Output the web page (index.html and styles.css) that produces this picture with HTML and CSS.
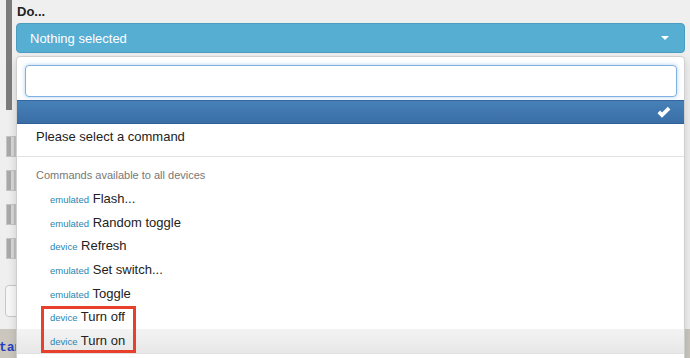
FILE: index.html
```html
<!DOCTYPE html>
<html lang="en">
<head>
    <meta charset="UTF-8">
    <meta name="viewport" content="width=device-width, initial-scale=1.0">
    <title>Do...</title>
    <link rel="stylesheet" href="styles.css">
</head>
<body>
    <div class="page">
        <!-- Action field with the select picker -->
        <div class="field">
            <div class="field-label">Do...</div>
            <button class="picker">
                <span>Nothing selected</span>
                <span class="caret"></span>
            </button>
        </div>

        <!-- Rows that sit behind the open menu -->
        <div class="rows">
            <div class="row-box"></div>
            <div class="row-box"></div>
            <div class="row-box"></div>
            <div class="row-box"></div>
        </div>
        <div class="back-button"></div>

        <div class="code-band"><span class="code">tan</span></div>

        <!-- Open dropdown menu -->
        <div class="menu">
            <div class="menu-search">
                <input type="text" class="search-input">
            </div>
            <div class="menu-selected">
                <svg class="check" width="15" height="13" viewBox="0 0 15 13">
                    <path d="M1.5 7.2 L4.2 4.6 L6 6.5 L11.8 0.8 L14.4 3.4 L6 11.8 Z" fill="#fff"/>
                </svg>
            </div>
            <div class="menu-item plain">Please select a command</div>
            <div class="menu-divider"></div>
            <div class="menu-header">Commands available to all devices</div>
            <div class="menu-item"><span class="tag">emulated</span> Flash...</div>
            <div class="menu-item"><span class="tag">emulated</span> Random toggle</div>
            <div class="menu-item"><span class="tag">device</span> Refresh</div>
            <div class="menu-item"><span class="tag">emulated</span> Set switch...</div>
            <div class="menu-item"><span class="tag">emulated</span> Toggle</div>
            <div class="menu-item"><span class="tag">device</span> Turn off</div>
            <div class="menu-item hover"><span class="tag">device</span> Turn on</div>
            <div class="menu-line"></div>
        </div>

        <!-- annotation box -->
        <div class="highlight-box"></div>
    </div>
</body>
</html>
```

FILE: styles.css
```css
body {
    margin: 0;
    font-family: "Liberation Sans", Arial, sans-serif;
    background: #efefef;
    color: #222;
}

.page {
    position: relative;
    width: 690px;
    height: 358px;
    overflow: hidden;
}

.field {
    margin-left: 6px;
    border-left: 6px solid #7c7c7c;
    padding: 3px 0 0 4px;
    height: 107px;
}

.field-label {
    font-size: 13px;
    font-weight: bold;
    line-height: 18px;
    margin: 0 0 2px 1px;
    color: #222;
}

.picker {
    display: flex;
    align-items: center;
    justify-content: space-between;
    width: 669px;
    height: 30px;
    padding: 0 13px 0 13px;
    background: #56aed3;
    border: 1px solid #4a9cc0;
    border-radius: 4px;
    color: #fff;
    font-family: "Liberation Sans", Arial, sans-serif;
    font-size: 13px;
    box-sizing: border-box;
}

.caret {
    width: 0;
    height: 0;
    border-left: 4px solid transparent;
    border-right: 4px solid transparent;
    border-top: 4px solid #fff;
    margin-right: 2px;
}

.rows {
    display: flex;
    flex-direction: column;
    gap: 13px;
    padding: 26px 0 0 6px;
}

.row-box {
    width: 10px;
    height: 21px;
    background: linear-gradient(to right, #a9a9a9 0 4px, #d8d8d8 4px 7px, #bdbdbd 7px);
    border: 1px solid #c4c4c4;
    box-sizing: border-box;
}

.back-button {
    margin: 26px 0 0 5px;
    width: 20px;
    height: 30px;
    border: 1px solid #c8c8c8;
    border-radius: 4px;
    background: #f7f7f7;
}

.code-band {
    margin-top: 12px;
    height: 30px;
    background: #cbc7bf;
    display: flex;
    align-items: flex-end;
}

.code {
    font-family: "Liberation Mono", "Courier New", monospace;
    font-size: 13px;
    font-weight: bold;
    color: #1f3fbf;
    margin: 0 0 4px -1px;
}

.menu {
    position: absolute;
    left: 16px;
    top: 56px;
    width: 669px;
    height: 320px;
    background: #fff;
    border: 1px solid #cfcfcf;
    border-radius: 4px;
    box-shadow: 0 4px 10px rgba(0, 0, 0, 0.15);
    box-sizing: border-box;
}

.menu-search {
    padding: 8px 7px 3px 8px;
}

.search-input {
    display: block;
    width: 100%;
    height: 32px;
    box-sizing: border-box;
    border: 1px solid #7fb1e0;
    border-radius: 4px;
    box-shadow: 0 0 4px rgba(102, 163, 230, 0.5);
    outline: none;
}

.menu-selected {
    height: 22px;
    background: linear-gradient(#4780b8, #3a6ea6);
    border-top: 1px solid #3366a0;
    border-bottom: 1px solid #2f5f95;
    display: flex;
    align-items: center;
    justify-content: flex-end;
    padding-right: 13px;
}

.menu-item {
    height: 23.67px;
    line-height: 23.67px;
    padding-left: 33px;
    font-size: 13px;
    color: #222;
    white-space: nowrap;
}

.menu-item.plain {
    padding-left: 19px;
    height: 27px;
    line-height: 25px;
}

.menu-item.hover {
    background: linear-gradient(#f3f3f3, #e7e7e7);
}

.tag {
    font-size: 9.5px;
    color: #2a86b3;
}

.menu-divider {
    height: 1px;
    background: #e2e2e2;
    margin: 5px 0 7px;
}

.menu-header {
    padding-left: 19px;
    font-size: 11px;
    color: #777;
    height: 23px;
    line-height: 23px;
}

.menu-line {
    height: 1px;
    background: #e2e2e2;
}

.highlight-box {
    position: absolute;
    left: 41px;
    top: 306px;
    width: 95px;
    height: 47px;
    border: 3px solid #e8412b;
    box-sizing: border-box;
}
```
